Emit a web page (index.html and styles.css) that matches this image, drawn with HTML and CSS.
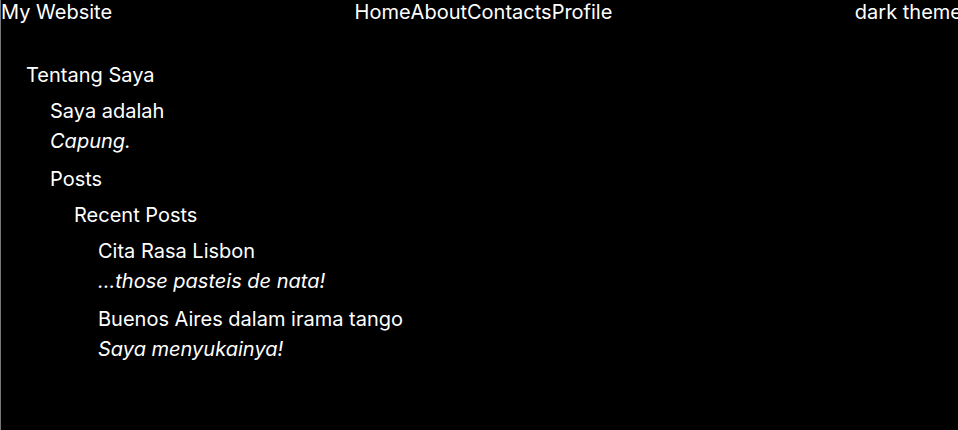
FILE: index.html
```html
<!DOCTYPE html>
<html lang="id">
<head>
<meta charset="utf-8">
<title>My Website</title>
<link rel="stylesheet" href="styles.css">
</head>
<body>
<header class="topbar">
  <div>My Website</div>
  <nav class="menu"><a href="#">Home</a><a href="#">About</a><a href="#">Contacts</a><a href="#">Profile</a></nav>
  <button class="theme" type="button">dark theme</button>
</header>
<main>
  <section class="box">
    <h1>Tentang Saya</h1>
    <section class="box">
      <h2>Saya adalah</h2>
      <p><i>Capung.</i></p>
    </section>
    <section class="box">
      <h2>Posts</h2>
      <section class="box">
        <h3>Recent Posts</h3>
        <section class="box">
          <h4>Cita Rasa Lisbon</h4>
          <p><i>...those pasteis de nata!</i></p>
        </section>
        <section class="box">
          <h4>Buenos Aires dalam irama tango</h4>
          <p><i>Saya menyukainya!</i></p>
        </section>
      </section>
    </section>
  </section>
</main>
</body>
</html>
```
FILE: styles.css
```css
* { box-sizing: border-box; margin: 0; padding: 0; }
body {
  min-height: 100vh;
  border-left: 1px solid #777;
  background: #000;
  color: #fff;
  font: 20px/30px Inter, "Liberation Sans", sans-serif;
  overflow-x: hidden;
}
.topbar {
  display: flex;
  justify-content: space-between;
  margin-right: -4px;
  line-height: 24px;
}
.menu { display: flex; }
.menu a { color: inherit; text-decoration: none; }
.theme { border: 0; background: none; color: inherit; font: inherit; cursor: pointer; }
main { padding: 30px 0 0 1px; }
h1, h2, h3, h4 { font-size: 20px; font-weight: 400; }
p { padding-bottom: 2px; }
i { font-style: oblique 10deg; }
.box { padding-left: 24px; padding-top: 6px; }
```
